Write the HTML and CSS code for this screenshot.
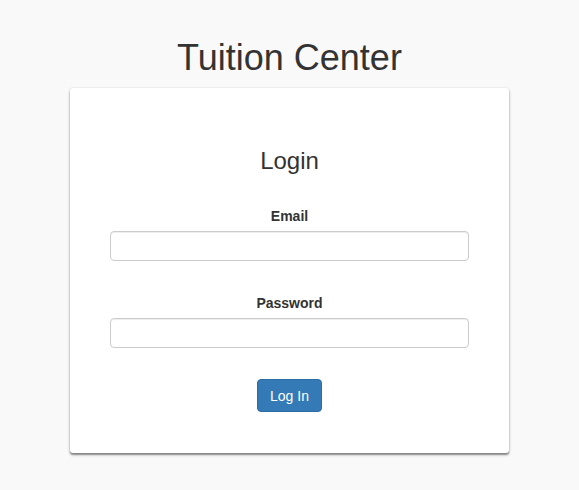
FILE: index.html
```html
<!DOCTYPE html>
<html>
<head>
<meta charset="utf-8">
<link rel="stylesheet" href="styles.css">
</head>
<body>
<div class="page">
  <h1 class="title">Tuition Center</h1>
  <div class="card">
    <h3 class="card-title">Login</h3>
    <form class="form">
      <div class="field">
        <label class="label">Email</label>
        <input class="input" type="text">
      </div>
      <div class="field field-last">
        <label class="label">Password</label>
        <input class="input" type="password">
      </div>
      <div class="actions">
        <button class="btn" type="button">Log In</button>
      </div>
    </form>
  </div>
</div>
</body>
</html>
```
FILE: styles.css
```css
html, body {
  margin: 0;
  padding: 0;
}
body {
  background: #f9f9f9;
  font-family: "Liberation Sans", Arial, Helvetica, sans-serif;
  font-size: 14px;
  line-height: 20px;
  color: #333;
}
.page {
  display: flex;
  flex-direction: column;
  align-items: center;
  padding-top: 38px;
  padding-bottom: 30px;
}
.title {
  margin: 0;
  font-size: 36px;
  line-height: 39.6px;
  font-weight: 500;
  color: #333;
  text-align: center;
}
.card {
  margin-top: 10px;
  width: 439px;
  box-sizing: border-box;
  background: #fff;
  border-radius: 3px;
  box-shadow: 0 0 2px rgba(0,0,0,0.14), 0 2px 1px rgba(0,0,0,0.22), 0 2px 3px rgba(0,0,0,0.3);
  padding: 60px 40px 41px;
}
.card-title {
  margin: 0;
  font-size: 24px;
  line-height: 26.4px;
  font-weight: 500;
  text-align: center;
}
.form {
  margin-top: 32px;
  display: flex;
  flex-direction: column;
}
.field {
  display: flex;
  flex-direction: column;
  align-items: center;
  margin-bottom: 32px;
}
.field-last {
  margin-bottom: 31px;
}
.label {
  font-weight: bold;
  margin-bottom: 5px;
}
.input {
  box-sizing: border-box;
  width: 359px;
  height: 30px;
  border: 1px solid #ccc;
  border-radius: 4px;
  box-shadow: inset 0 1px 1px rgba(0,0,0,0.075);
  padding: 4px 12px;
  font-size: 14px;
  font-family: inherit;
  margin: 0;
}
.actions {
  display: flex;
  justify-content: center;
}
.btn {
  box-sizing: border-box;
  height: 33px;
  padding: 0 12px;
  background: #337ab7;
  border: 1px solid #2e6da4;
  border-radius: 4px;
  color: #fff;
  font-family: inherit;
  font-size: 14px;
  line-height: 20px;
  cursor: pointer;
}
```
